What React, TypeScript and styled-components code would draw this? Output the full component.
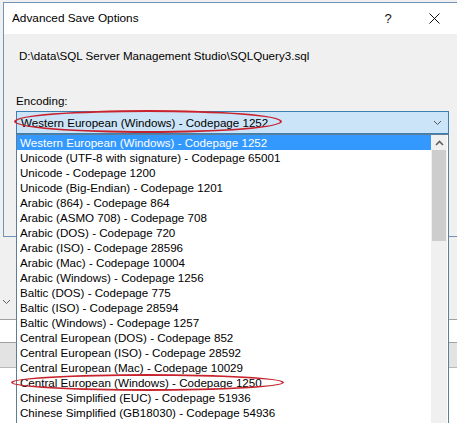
import React from "react";
import styled, { createGlobalStyle } from "styled-components";

const GlobalStyle = createGlobalStyle`
  html, body {
    margin: 0;
    padding: 0;
    background: #f0f0f0;
  }
  body {
    font-family: "Liberation Sans", Arial, sans-serif;
    font-size: 11.6px;
    color: #000;
  }
`;

const encodings = [
  "Western European (Windows) - Codepage 1252",
  "Unicode (UTF-8 with signature) - Codepage 65001",
  "Unicode - Codepage 1200",
  "Unicode (Big-Endian) - Codepage 1201",
  "Arabic (864) - Codepage 864",
  "Arabic (ASMO 708) - Codepage 708",
  "Arabic (DOS) - Codepage 720",
  "Arabic (ISO) - Codepage 28596",
  "Arabic (Mac) - Codepage 10004",
  "Arabic (Windows) - Codepage 1256",
  "Baltic (DOS) - Codepage 775",
  "Baltic (ISO) - Codepage 28594",
  "Baltic (Windows) - Codepage 1257",
  "Central European (DOS) - Codepage 852",
  "Central European (ISO) - Codepage 28592",
  "Central European (Mac) - Codepage 10029",
  "Central European (Windows) - Codepage 1250",
  "Chinese Simplified (EUC) - Codepage 51936",
  "Chinese Simplified (GB18030) - Codepage 54936",
];

// the desktop: background app (SSMS) with the dialog on top
const Desktop = styled.div`
  position: relative;
  width: 457px;
  height: 423px;
  overflow: hidden;
  display: flex;
  flex-direction: column;
  background: #f0f0f0;
`;

const BackArea = styled.div`
  height: 319px;
  flex: none;
  display: flex;
  align-items: flex-end;
  padding: 0 0 14px 2px;
  box-sizing: border-box;
`;

const InputStrip = styled.div`
  height: 22px;
  flex: none;
  background: #fff;
  border-top: 1px solid #a0a0a0;
  border-bottom: 1px solid #a0a0a0;
`;

const TabBand = styled.div`
  height: 24px;
  flex: none;
  background: #e3e3e3;
  border-bottom: 1px solid #b8b8b8;
`;

const BackRest = styled.div`
  flex: 1;
  background: #fff;
`;

const Dialog = styled.div`
  position: absolute;
  top: 2px;
  left: 3px;
  width: 455px;
  height: 235px;
  box-sizing: border-box;
  border: 1px solid #7193b8;
  background: #f0f0f0;
  display: flex;
  flex-direction: column;
`;

const TitleBar = styled.div`
  height: 31px;
  flex: none;
  background: #fff;
  display: flex;
  align-items: center;
  padding-left: 8px;
`;

const Title = styled.div`
  flex: 1;
  font-size: 11.8px;
  margin-top: -1px;
`;

const TitleButton = styled.div`
  width: 46px;
  height: 31px;
  display: flex;
  align-items: center;
  justify-content: center;
  font-size: 13px;
  color: #111;
`;

const Body = styled.div`
  padding: 14px 12px 0 12px;
  display: flex;
  flex-direction: column;
`;

const PathText = styled.div`
  line-height: 15px;
  margin-left: 3px;
`;

const Label = styled.div`
  line-height: 15px;
  margin-top: 30px;
`;

const ComboWrap = styled.div`
  position: relative;
  margin-top: 3px;
  width: 433px;
`;

const Combo = styled.div`
  height: 23px;
  box-sizing: border-box;
  border: 1px solid #3c7fb1;
  background: #cce4f7;
  display: flex;
  align-items: center;
  padding: 0 6px 0 4px;
`;

const ComboText = styled.div`
  flex: 1;
`;

const DropList = styled.div`
  position: absolute;
  top: 23px;
  left: 0;
  width: 433px;
  height: 320px;
  box-sizing: border-box;
  border: 1px solid #5f7d95;
  background: #fff;
  display: flex;
  z-index: 5;
`;

const Items = styled.div`
  flex: 1;
  display: flex;
  flex-direction: column;
`;

const Item = styled.div<{ $selected?: boolean }>`
  position: relative;
  height: 15px;
  line-height: 15px;
  padding-left: 3px;
  white-space: nowrap;
  background: ${(p) => (p.$selected ? "#3399ff" : "transparent")};
  color: ${(p) => (p.$selected ? "#fff" : "#000")};
`;

const ScrollBar = styled.div`
  width: 16px;
  flex: none;
  background: #f0f0f0;
  display: flex;
  flex-direction: column;
  margin-right: 1px;
`;

const ScrollButton = styled.div`
  height: 15px;
  display: flex;
  align-items: center;
  justify-content: center;
`;

const Thumb = styled.div`
  height: 91px;
  background: #cdcdcd;
  margin: 0 1px;
`;

// red annotation ring drawn over the screenshot
const Ring = styled.div<{ $left: number; $top: number; $w: number; $h: number }>`
  position: absolute;
  left: ${(p) => p.$left}px;
  top: ${(p) => p.$top}px;
  width: ${(p) => p.$w}px;
  height: ${(p) => p.$h}px;
  box-sizing: border-box;
  border: 2px solid #c8232c;
  border-radius: 50% / 50%;
  pointer-events: none;
  z-index: 10;
`;

const Chevron = ({ up, color }: { up?: boolean; color: string }) => (
  <svg width="9" height="6" viewBox="0 0 9 6">
    <polyline
      points={up ? "1,5 4.5,1.5 8,5" : "1,1 4.5,4.5 8,1"}
      fill="none"
      stroke={color}
      strokeWidth={up ? 1.6 : 1}
    />
  </svg>
);

export default function App() {
  return (
    <>
      <GlobalStyle />
      <Desktop>
        <BackArea>
          <Chevron color="#606060" />
        </BackArea>
        <InputStrip />
        <TabBand />
        <BackRest />

        <Dialog>
          <TitleBar>
            <Title>Advanced Save Options</Title>
            <TitleButton>?</TitleButton>
            <TitleButton>
              <svg width="11" height="11" viewBox="0 0 11 11">
                <path d="M0.5 0.5 L10.5 10.5 M10.5 0.5 L0.5 10.5" stroke="#111" strokeWidth="1" />
              </svg>
            </TitleButton>
          </TitleBar>
          <Body>
            <PathText>D:\data\SQL Server Management Studio\SQLQuery3.sql</PathText>
            <Label>Encoding:</Label>
            <ComboWrap>
              <Combo>
                <ComboText>Western European (Windows) - Codepage 1252</ComboText>
                <Chevron color="#555" />
              </Combo>
              <Ring $left={-2} $top={-1} $w={268} $h={23} />
              <DropList>
                <Items>
                  {encodings.map((e, i) => (
                    <Item key={e} $selected={i === 0}>
                      {e}
                      {i === 16 && <Ring $left={-6} $top={-1} $w={273} $h={17} />}
                    </Item>
                  ))}
                </Items>
                <ScrollBar>
                  <ScrollButton>
                    <Chevron up color="#606060" />
                  </ScrollButton>
                  <Thumb />
                </ScrollBar>
              </DropList>
            </ComboWrap>
          </Body>
        </Dialog>
      </Desktop>
    </>
  );
}
